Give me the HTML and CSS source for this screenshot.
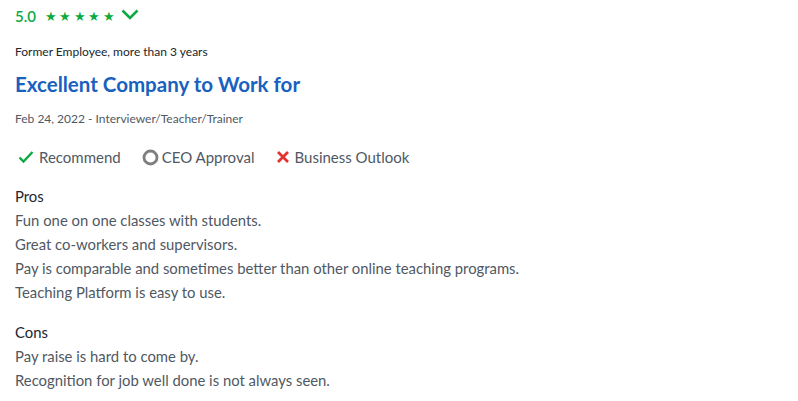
FILE: index.html
```html
<!DOCTYPE html>
<html>
<head>
<meta charset="utf-8">
<link rel="stylesheet" href="styles.css">
</head>
<body>
<div class="review">
  <div class="rating-row">
    <span class="rating">5.0</span>
    <span class="stars">★★★★★</span>
    <svg class="chev" width="18" height="12" viewBox="0 0 18 12"><path d="M1.5 1.5 L9 9 L16.5 1.5" fill="none" stroke="#0caa41" stroke-width="2.6"/></svg>
  </div>
  <div class="author">Former Employee, more than 3 years</div>
  <h2 class="title">Excellent Company to Work for</h2>
  <div class="meta">Feb 24, 2022 - Interviewer/Teacher/Trainer</div>
  <div class="ratings">
    <span class="item"><svg width="16" height="14" viewBox="0 0 16 14"><path d="M1.5 7.5 L5.5 11.5 L14.5 2" fill="none" stroke="#0caa41" stroke-width="2.4"/></svg>Recommend</span>
    <span class="item tight"><svg width="17" height="17" viewBox="0 0 17 17"><circle cx="8.5" cy="8.5" r="6.5" fill="none" stroke="#7f7f7f" stroke-width="2.8"/></svg>CEO Approval</span>
    <span class="item"><svg width="14" height="14" viewBox="0 0 14 14"><path d="M2 2 L12 12 M12 2 L2 12" fill="none" stroke="#e13131" stroke-width="2.8"/></svg>Business Outlook</span>
  </div>
  <div class="section">
    <div class="label">Pros</div>
    <p>Fun one on one classes with students.</p>
    <p>Great co-workers and supervisors.</p>
    <p>Pay is comparable and sometimes better than other online teaching programs.</p>
    <p>Teaching Platform is easy to use.</p>
  </div>
  <div class="section cons">
    <div class="label">Cons</div>
    <p>Pay raise is hard to come by.</p>
    <p>Recognition for job well done is not always seen.</p>
  </div>
</div>
</body>
</html>
```
FILE: styles.css
```css
html, body { margin: 0; padding: 0; background: #fff; }
body { font-family: Lato, "Open Sans", sans-serif; color: #505863; }
.review { padding: 6px 15px 0 15px; }
.rating-row { display: flex; align-items: center; height: 20px; }
.rating { color: #0caa41; font-size: 15px; font-weight: 600; margin-right: 9px; }
.stars { color: #0caa41; font-size: 12.5px; letter-spacing: 2.5px; margin-right: 4px; }
.chev { display: block; margin-top: -3px; }
.author { font-size: 12px; color: #20262e; margin-top: 17.5px; line-height: 15px; }
.title { font-size: 20.5px; font-weight: 700; color: #1861bf; margin: 12.5px 0 0 0; line-height: 26px; }
.meta { font-size: 12px; color: #505863; margin-top: 13.5px; line-height: 15px; }
.ratings { display: flex; gap: 21px; margin-top: 21.5px; font-size: 15px; line-height: 20px; padding-left: 3px; }
.item { display: flex; align-items: center; gap: 5px; }
.item.tight { gap: 3px; }
.item svg { display: block; }
.section { margin-top: 17px; font-size: 14.85px; line-height: 24px; }
.section.cons { margin-top: 16px; }
.label { color: #20262e; }
.section p { margin: 0; }
```
